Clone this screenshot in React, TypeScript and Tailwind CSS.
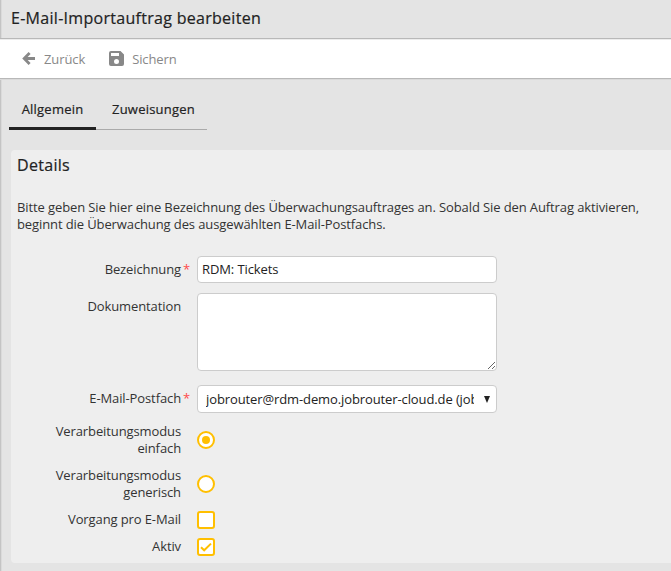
import { useState } from "react";
import type { ReactNode } from "react";

function Row({ label, required, className, children }: { label: string; required?: boolean; className: string; children: ReactNode }) {
  return (
    <div className={`flex ${className}`}>
      <div className="relative w-[170px] shrink-0 text-right whitespace-pre-line">
        {label}
        {required && <span className="absolute left-[172px] top-0 text-[#ff4b4b]">*</span>}
      </div>
      <div className="ml-4">{children}</div>
    </div>
  );
}

function Radio({ checked, onClick }: { checked: boolean; onClick: () => void }) {
  return (
    <button onClick={onClick} className="flex size-[18px] items-center justify-center rounded-full border-2 border-[#ffbf00] bg-white">
      {checked && <span className="size-2 rounded-full bg-[#ffbf00]" />}
    </button>
  );
}

function Checkbox({ checked, onClick }: { checked: boolean; onClick: () => void }) {
  return (
    <button onClick={onClick} className="flex size-[18px] items-center justify-center rounded-[3px] border-2 border-[#ffbf00] bg-white">
      {checked && (
        <svg width="12" height="10" viewBox="0 0 12 10" fill="none" stroke="#ffbf00" strokeWidth="2">
          <path d="M1 5.2 4.2 8.3 11 1.6" />
        </svg>
      )}
    </button>
  );
}

export default function App() {
  const [mode, setMode] = useState("simple");
  const [perMail, setPerMail] = useState(false);
  const [active, setActive] = useState(true);

  return (
    <div className="h-[571px] w-[671px] overflow-hidden bg-[#e4e4e4] font-['Open_Sans',sans-serif] text-[13px] leading-[17px] tracking-[-0.107px] text-[#333] shadow-[inset_1px_0_0_#c4c4c4,inset_2px_0_0_#dadada]">
      <h1 className="h-[38px] pl-[11px] pt-[6px] text-[16px] leading-6 tracking-[0.29px] text-[#222] [-webkit-text-stroke:0.2px_#222]">E-Mail-Importauftrag bearbeiten</h1>

      <div className="flex h-[41px] items-center border-y border-[#b8b8b8] bg-white pl-[22px] text-[#888] shadow-[inset_0_1px_0_#ececec,0_1px_0_#dadada]">
        <button className="flex items-center">
          <svg width="13" height="13" viewBox="0 0 13 13" fill="none" stroke="#888" strokeWidth="2.8">
            <path d="M7.6 1 2.2 6.5l5.4 5.5M2.5 6.5H13" />
          </svg>
          <span className="ml-[9px] pt-[2px]">Zurück</span>
        </button>
        <button className="ml-6 flex items-center">
          <svg width="15" height="15" viewBox="0 0 15 15">
            <path fill="#888" fillRule="evenodd" d="M2 0h9.5L15 3.5V13a2 2 0 0 1-2 2H2a2 2 0 0 1-2-2V2a2 2 0 0 1 2-2Zm0 2v3h8V2Zm5.5 6a2.5 2.5 0 1 0 0 5 2.5 2.5 0 0 0 0-5Z" />
          </svg>
          <span className="ml-2 pt-[2px]">Sichern</span>
        </button>
      </div>

      <div className="ml-[9px] mt-[21px] flex h-[30px] tracking-[0.22px] text-[#222] [-webkit-text-stroke:0.2px_#222]">
        <button className="h-[30px] w-[87px] border-b-3 border-[#222] pb-[9px]">Allgemein</button>
        <button className="h-[30px] w-[111px] border-b border-[#aaa] pb-[11px] pl-[4px]">Zuweisungen</button>
      </div>

      <div className="ml-[11px] mt-5 h-[413px] rounded-l-[4px] bg-[#eee] pt-[3px]">
        <h2 className="ml-[6px] text-[16px] leading-6 tracking-[0.3px] text-[#222] [-webkit-text-stroke:0.2px_#222]">Details</h2>
        <p className="ml-[6px] mt-[22px] w-[640px]">
          Bitte geben Sie hier eine Bezeichnung des Überwachungsauftrages an. Sobald Sie den Auftrag aktivieren,
          <br />
          beginnt die Überwachung des ausgewählten E-Mail-Postfachs.
        </p>

        <div className="mt-[23px]">
          <Row label="Bezeichnung" required className="h-[37px] [&>div:first-child]:pt-[5px] [&_span]:pt-[5px]">
            <input defaultValue="RDM: Tickets" className="block h-[27px] w-[300px] rounded-[4px] border border-[#ccc] bg-white px-1 pb-[2px] text-[#222] outline-none" />
          </Row>
          <Row label="Dokumentation" className="h-[92px] [&>div:first-child]:pt-[5px]">
            <textarea className="block h-[78px] w-[300px] rounded-[4px] border border-[#ccc] bg-white outline-none" />
          </Row>
          <Row label="E-Mail-Postfach" required className="h-[33px] [&>div:first-child]:pt-[5px] [&_span]:pt-[5px]">
            <div className="flex h-7 w-[300px] items-center rounded-[4px] border border-[#ccc] bg-white pl-2 text-[#222]">
              <span className="w-[268px] overflow-hidden whitespace-nowrap !pt-0">jobrouter@rdm-demo.jobrouter-cloud.de (job</span>
              <svg className="ml-[10px]" width="6" height="7" viewBox="0 0 6 7">
                <path fill="#222" d="M0 0h6L3 7Z" />
              </svg>
            </div>
          </Row>
          <Row label={"Verarbeitungsmodus\neinfach"} className="h-11 items-center">
            <Radio checked={mode === "simple"} onClick={() => setMode("simple")} />
          </Row>
          <Row label={"Verarbeitungsmodus\ngenerisch"} className="h-11 items-center">
            <Radio checked={mode === "generic"} onClick={() => setMode("generic")} />
          </Row>
          <Row label="Vorgang pro E-Mail" className="h-[27px] items-center">
            <Checkbox checked={perMail} onClick={() => setPerMail(!perMail)} />
          </Row>
          <Row label="Aktiv" className="h-[27px] items-center">
            <Checkbox checked={active} onClick={() => setActive(!active)} />
          </Row>
        </div>
      </div>
    </div>
  );
}
